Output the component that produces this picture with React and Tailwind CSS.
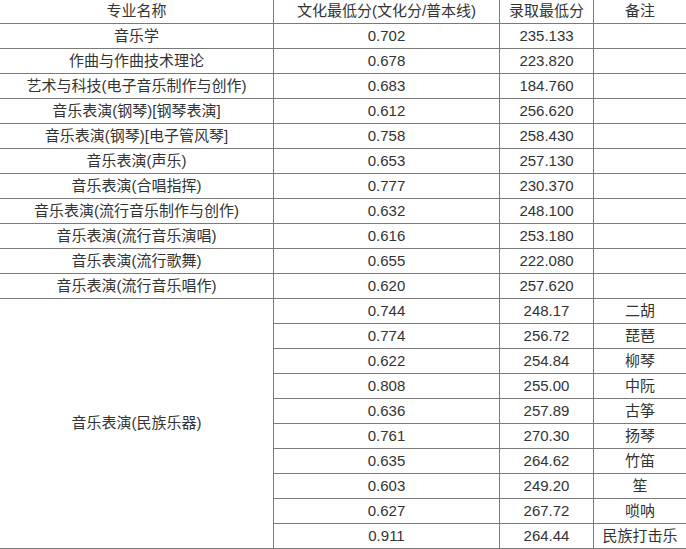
import React from "react";

const top = [
  ["音乐学", "0.702", "235.133"],
  ["作曲与作曲技术理论", "0.678", "223.820"],
  ["艺术与科技(电子音乐制作与创作)", "0.683", "184.760"],
  ["音乐表演(钢琴)[钢琴表演]", "0.612", "256.620"],
  ["音乐表演(钢琴)[电子管风琴]", "0.758", "258.430"],
  ["音乐表演(声乐)", "0.653", "257.130"],
  ["音乐表演(合唱指挥)", "0.777", "230.370"],
  ["音乐表演(流行音乐制作与创作)", "0.632", "248.100"],
  ["音乐表演(流行音乐演唱)", "0.616", "253.180"],
  ["音乐表演(流行歌舞)", "0.655", "222.080"],
  ["音乐表演(流行音乐唱作)", "0.620", "257.620"],
];

const folk = [
  ["0.744", "248.17", "二胡"],
  ["0.774", "256.72", "琵琶"],
  ["0.622", "254.84", "柳琴"],
  ["0.808", "255.00", "中阮"],
  ["0.636", "257.89", "古筝"],
  ["0.761", "270.30", "扬琴"],
  ["0.635", "264.62", "竹笛"],
  ["0.603", "249.20", "笙"],
  ["0.627", "267.72", "唢呐"],
  ["0.911", "264.44", "民族打击乐"],
];

const cell = "bg-white flex items-center justify-center whitespace-nowrap";

export default function App() {
  return (
    <div
      className="w-[686px] h-[549px] bg-[#7a7a7a] pb-px text-[15px] text-[#333333] overflow-hidden"
      style={{ fontFamily: '"Liberation Sans", "Noto Sans CJK SC", sans-serif' }}
    >
      <div className="grid grid-cols-[273px_225px_93px_92px] grid-rows-[23px] auto-rows-[24px] gap-px">
        <div className={cell}>专业名称</div>
        <div className={cell}>文化最低分(文化分/普本线)</div>
        <div className={cell}>录取最低分</div>
        <div className={cell}>备注</div>
        {top.map((r, i) => (
          <React.Fragment key={i}>
            <div className={cell}>{r[0]}</div>
            <div className={cell}>{r[1]}</div>
            <div className={cell}>{r[2]}</div>
            <div className={cell}></div>
          </React.Fragment>
        ))}
        <div className={cell + " row-span-10"}>音乐表演(民族乐器)</div>
        {folk.map((r, i) => (
          <React.Fragment key={"f" + i}>
            <div className={cell}>{r[0]}</div>
            <div className={cell}>{r[1]}</div>
            <div className={cell}>{r[2]}</div>
          </React.Fragment>
        ))}
      </div>
    </div>
  );
}
